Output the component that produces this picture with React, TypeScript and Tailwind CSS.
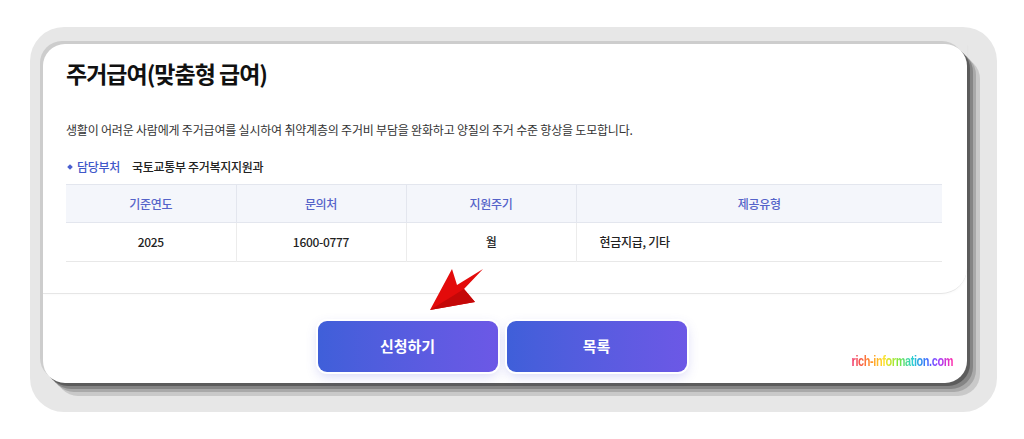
import React from "react";

const font = { fontFamily: '"Noto Sans CJK KR", "Noto Sans", sans-serif' };

export default function App() {
  return (
    <div className="w-[1024px] h-[439px] bg-white pt-[27px] pl-[30px]" style={font}>
      <div className="w-[967px] h-[385px] bg-[#e7e7e7] rounded-[34px] pt-[17px] pl-[13px]">
        <div className="relative w-[924px] h-[339px] bg-white rounded-[22px] shadow-[-3px_-3px_0_#cdcdcd,3px_3px_0_#5c5c5c,6px_6px_0_#858585,9px_9px_0_#a9a9a9,13px_13px_0_#c9c9c9] flex flex-col">
          <div className="h-[250px] border-b border-[#e6e6e6] rounded-br-[26px] pl-[23px] pr-[26px] pt-[13px] shadow-[1px_1px_2px_rgba(0,0,0,0.02)]">
            <h1 className="text-[23px] leading-[32px] font-bold text-[#111] tracking-[-1px]">주거급여(맞춤형 급여)</h1>
            <p className="mt-[31px] text-[12px] leading-[20px] text-[#333] tracking-[-0.2px]">
              생활이 어려운 사람에게 주거급여를 실시하여 취약계층의 주거비 부담을 완화하고 양질의 주거 수준 향상을 도모합니다.
            </p>
            <div className="mt-[17px] flex items-center text-[12px] leading-[20px] tracking-[-0.3px]">
              <span className="ml-[2px] w-[4px] h-[4px] bg-[#4a5fd0] rotate-45 mr-[5px]" />
              <span className="text-[#4057c9] font-medium">담당부처</span>
              <span className="ml-[12px] text-[#222] font-medium">국토교통부 주거복지지원과</span>
            </div>
            <table className="mt-[7px] w-[876px] border-collapse text-[12px] tracking-[-0.3px]">
              <thead>
                <tr className="h-[38px] bg-[#f4f6fb] border-t border-b border-[#e3e6ee]">
                  <th className="w-[170px] font-medium text-[#5563c9] border-r border-[#e3e6ee]">기준연도</th>
                  <th className="w-[170px] font-medium text-[#5563c9] border-r border-[#e3e6ee]">문의처</th>
                  <th className="w-[170px] font-medium text-[#5563c9] border-r border-[#e3e6ee]">지원주기</th>
                  <th className="font-medium text-[#5563c9]">제공유형</th>
                </tr>
              </thead>
              <tbody>
                <tr className="h-[39px] border-b border-[#e8e8e8]">
                  <td className="text-center font-medium text-[#222] border-r border-[#ececec]">2025</td>
                  <td className="text-center font-medium text-[#222] border-r border-[#ececec]">1600-0777</td>
                  <td className="text-center font-medium text-[#222] border-r border-[#ececec]">월</td>
                  <td className="pl-[23px] font-medium text-[#222]">현금지급, 기타</td>
                </tr>
              </tbody>
            </table>
          </div>
          <div className="flex justify-center gap-[9px] pt-[27px] pr-[6px]">
            <button className="w-[180px] h-[51px] rounded-[9px] bg-gradient-to-r from-[#3f5fd9] to-[#6c58e6] text-white text-[15px] font-bold shadow-[0_4px_12px_rgba(90,90,220,0.25)] ring-2 ring-white">신청하기</button>
            <button className="w-[180px] h-[51px] rounded-[9px] bg-gradient-to-r from-[#3f5fd9] to-[#6c58e6] text-white text-[15px] font-bold shadow-[0_4px_12px_rgba(90,90,220,0.25)] ring-2 ring-white">목록</button>
          </div>
          <div
            className="absolute right-[14px] bottom-[15px] origin-right scale-x-[0.78] text-[14px] leading-[14px] font-bold tracking-[-0.5px] bg-clip-text text-transparent"
            style={{ fontFamily: '"Liberation Sans", sans-serif', backgroundImage: "linear-gradient(90deg,#f0306a 0%,#ff8a2a 18%,#ffe22a 32%,#7ee83a 46%,#2ad0d0 60%,#3a6cff 74%,#a040ff 86%,#ff2aa8 100%)" }}
          >
            rich-information.com
          </div>
          <svg className="absolute left-[380px] top-[220px]" width="70" height="52" viewBox="380 220 70 52">
            <polygon points="387,266 409,225 414,241 440,225 421,245 432,258" fill="#e30b0b" />
            <polygon points="387,266 421,245 432,258" fill="#c40808" />
          </svg>
        </div>
      </div>
    </div>
  );
}
